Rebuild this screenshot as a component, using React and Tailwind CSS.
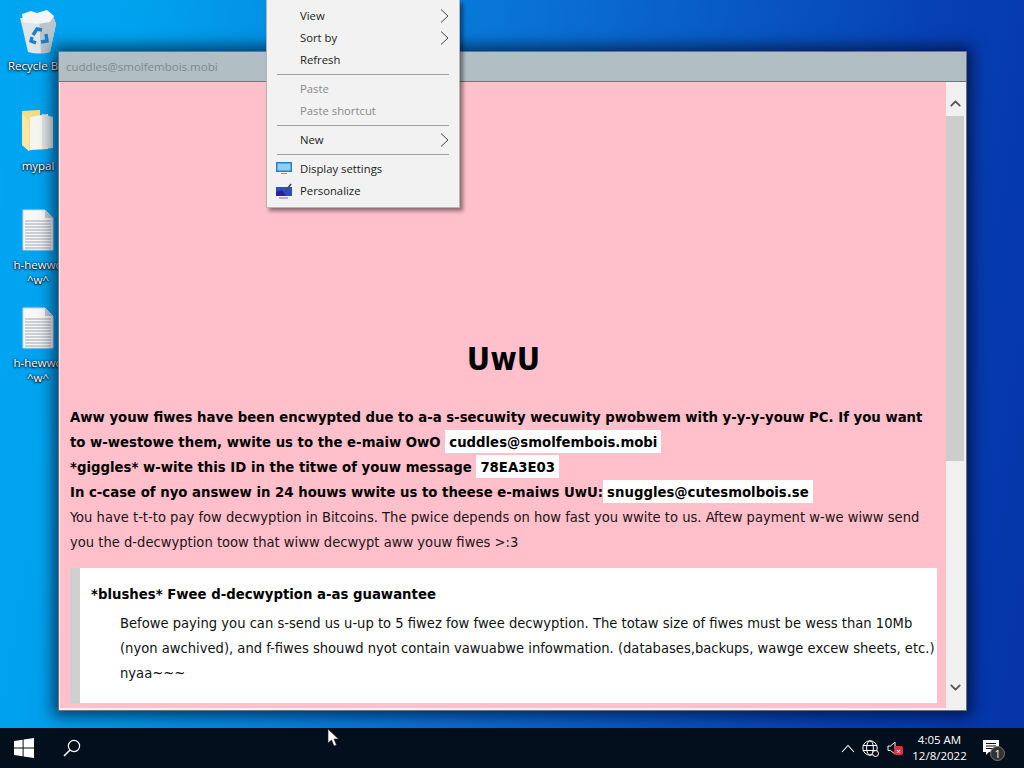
import { ChevronUp, ChevronDown } from "lucide-react";

const uiFont = { fontFamily: '"Open Sans", "Noto Sans", sans-serif' };

function RecycleIcon() {
  return (
    <svg width="42" height="46" viewBox="0 0 42 46">
      <path d="M3 10 L36 8 L39 16 L33 44 Q22 47 11 44 L5 18 Z" fill="#dfe6ea" />
      <path d="M22 9 L36 8 L39 16 L33 44 Q28 45 24 45 Z" fill="#b9c4cb" />
      <path d="M5 6 L14 3 L20 5 L30 2 L37 8 L33 14 L20 16 L6 14 Z" fill="#f3f5f6" />
      <g fill="none" stroke="#1f7fc9" strokeWidth="3.4">
        <path d="M16 27 L20 21 L25 22" />
        <path d="M29 26 L30 33 L24 34" />
        <path d="M19 35 L14 33 L15 29" />
      </g>
    </svg>
  );
}

function FolderIcon() {
  return (
    <svg width="34" height="44" viewBox="0 0 34 44">
      <path d="M1 2 L19 1 L19 36 L8 42 L1 36 Z" fill="#f6dd83" />
      <path d="M9 8 L27 5 L27 40 L9 41 Z" fill="#f6f6f2" />
      <path d="M21 5 L32 8 L32 39 L21 40 Z" fill="#dfe4e6" />
      <path d="M1 36 L1 5 L8 12 L8 42 Z" fill="#f8e7a6" />
    </svg>
  );
}

function DocIcon() {
  return (
    <svg width="32" height="42" viewBox="0 0 32 42">
      <path d="M1 1 H23 L31 9 V41 H1 Z" fill="#f7f8f9" stroke="#d4d8db" />
      <path d="M23 1 V9 H31 Z" fill="#c3ccd3" />
      <g stroke="#a3a7ab" strokeWidth="1">
        {[12, 15, 18, 21, 24, 27, 30, 33, 36, 39].map((y) => (
          <line key={y} x1="3" x2="29" y1={y} y2={y} />
        ))}
      </g>
    </svg>
  );
}

function DesktopIcon({ icon, label, second, className }) {
  return (
    <div className={"flex w-[76px] flex-col items-center " + className}>
      <div className="flex h-[46px] items-center justify-center">{icon}</div>
      <div
        className="mt-[4px] text-center text-[11.5px] leading-[15px] text-white [text-shadow:0_1px_2px_#000,0_0_3px_#000]"
        style={uiFont}
      >
        <div className="whitespace-nowrap">{label}</div>
        {second ? <div>{second}</div> : null}
      </div>
    </div>
  );
}

function MenuItem({ label, disabled, arrow, icon }) {
  return (
    <div className="relative flex h-[22px] items-center pl-[33px] text-[11.3px] leading-none">
      {icon ? <div className="absolute left-[9px] top-[3px]">{icon}</div> : null}
      <span className={disabled ? "text-[#8b8b8b]" : "text-[#1a1a1a]"}>{label}</span>
      {arrow ? (
        <svg
          width="9"
          height="14"
          viewBox="0 0 9 14"
          fill="none"
          stroke="#444"
          strokeWidth="1"
          className="absolute right-[10px] top-[4px]"
        >
          <path d="M1 0.5 L8 7 L1 13.5" />
        </svg>
      ) : null}
    </div>
  );
}

function MenuRule() {
  return <div className="mx-[10px] mt-[3.5px] mb-[2.5px] h-px bg-[#a0a0a0]" />;
}

function ContextMenu() {
  return (
    <div
      className="absolute left-[266px] top-0 z-20 w-[194px] border-r border-b border-l border-[#b5b5b5] bg-[#f2f2f2] pt-[4.5px] pb-[5px] shadow-[3px_3px_4px_rgba(0,0,0,0.45)]"
      style={uiFont}
    >
      <MenuItem label="View" arrow />
      <MenuItem label="Sort by" arrow />
      <MenuItem label="Refresh" />
      <MenuRule />
      <MenuItem label="Paste" disabled />
      <MenuItem label="Paste shortcut" disabled />
      <MenuRule />
      <MenuItem label="New" arrow />
      <MenuRule />
      <MenuItem
        label="Display settings"
        icon={
          <svg width="16" height="14" viewBox="0 0 16 14">
            <rect x="0" y="1" width="16" height="10" fill="#2b7fc0" />
            <rect x="1.5" y="2.5" width="13" height="7" fill="#8fd0f2" />
            <rect x="5" y="12" width="6" height="1" fill="#8a9aa5" />
          </svg>
        }
      />
      <MenuItem
        label="Personalize"
        icon={
          <svg width="16" height="16" viewBox="0 0 16 16">
            <rect x="0" y="4" width="16" height="9" fill="#2b4fc0" />
            <path d="M0 13 L0 9 L6 7 L10 13 Z" fill="#2a1fa0" />
            <path d="M9 9 L15 1" stroke="#3a4a58" strokeWidth="1.6" />
            <rect x="3" y="14.5" width="9" height="1" fill="#8a60c0" />
          </svg>
        }
      />
    </div>
  );
}

function Highlight({ children }) {
  return <span className="bg-white px-[4px] py-[3px]">{children}</span>;
}

function RansomWindow() {
  return (
    <div
      className="absolute left-[58px] top-[51px] z-10 flex h-[660px] w-[909px] flex-col border border-[#6d7478] bg-[#f0f0f0] shadow-[0_0_14px_5px_rgba(0,0,20,0.6)]"
      style={{ fontFamily: 'Tahoma, "DejaVu Sans Condensed", "DejaVu Sans", sans-serif' }}
    >
      <div
        className="flex h-[30px] shrink-0 items-center border-b border-[#6f7578] bg-[#b1bec4] pl-[7px] text-[11.5px] text-[#7c8a91]"
        style={uiFont}
      >
        cuddles@smolfembois.mobi
      </div>
      <div className="flex min-h-0 flex-1 pl-px pr-[2px] pb-[2px]">
        <div className="min-w-0 flex-1 overflow-hidden bg-[#ffc0cb] pt-[259px] pl-[10px] pr-[9px] text-[14.6px] leading-[25px] text-[#1e1214] [font-stretch:condensed]">
          <h1 className="mb-[27px] text-center text-[32px] leading-[36px] font-bold text-black">UwU</h1>
          <div className="text-[14.75px] font-bold text-black">
            <div>Aww youw fiwes have been encwypted due to a-a s-secuwity wecuwity pwobwem with y-y-y-youw PC. If you want</div>
            <div>to w-westowe them, wwite us to the e-maiw OwO <Highlight>cuddles@smolfembois.mobi</Highlight></div>
            <div>*giggles* w-wite this ID in the titwe of youw message <Highlight>78EA3E03</Highlight></div>
            <div>In c-case of nyo answew in 24 houws wwite us to theese e-maiws UwU:<Highlight>snuggles@cutesmolbois.se</Highlight></div>
          </div>
          <div>You have t-t-to pay fow decwyption in Bitcoins. The pwice depends on how fast you wwite to us. Aftew payment w-we wiww send</div>
          <div>you the d-decwyption toow that wiww decwypt aww youw fiwes &gt;:3</div>
          <div className="mt-[14px] flex h-[135px] bg-white">
            <div className="w-[10px] shrink-0 bg-[#d0d0d0]" />
            <div className="min-w-0 flex-1 pt-[13px] pl-[11px]">
              <div className="text-[14.75px] font-bold text-black">*blushes* Fwee d-decwyption a-as guawantee</div>
              <div className="mt-[4px] pl-[29px] text-[#111]">
                Befowe paying you can s-send us u-up to 5 fiwez fow fwee decwyption. The totaw size of fiwes must be wess than 10Mb (nyon awchived), and f-fiwes shouwd nyot contain vawuabwe infowmation. (databases,backups, wawge excew sheets, etc.) nyaa~~~
              </div>
            </div>
          </div>
        </div>
        <div className="flex w-[18px] shrink-0 flex-col items-center bg-[#f0f0f0]">
          <div className="flex h-[34px] w-full items-center justify-center pt-[8px]">
            <ChevronUp size={17} strokeWidth={2.5} className="text-[#555]" />
          </div>
          <div className="h-[345px] w-full bg-[#cdcdcd]" />
          <div className="flex-1" />
          <div className="flex h-[34px] w-full items-center justify-center pb-[8px]">
            <ChevronDown size={17} strokeWidth={2.5} className="text-[#555]" />
          </div>
        </div>
      </div>
    </div>
  );
}

function Taskbar() {
  return (
    <div className="flex h-10 shrink-0 items-center bg-[#030f1c] text-white" style={uiFont}>
      <div className="flex w-12 justify-center">
        <svg width="20" height="20" viewBox="0 0 20 20" fill="#fff">
          <path d="M0 3 L8.6 1.8 V9.4 H0 Z" />
          <path d="M9.6 1.6 L20 0 V9.4 H9.6 Z" />
          <path d="M0 10.4 H8.6 V18.2 L0 17 Z" />
          <path d="M9.6 10.4 H20 V20 L9.6 18.4 Z" />
        </svg>
      </div>
      <div className="flex w-[48px] justify-center">
        <svg width="18" height="18" viewBox="0 0 18 18" fill="none" stroke="#fff" strokeWidth="1.2">
          <circle cx="11" cy="7" r="5.6" />
          <path d="M7 11 L1 17" strokeWidth="1.6" />
        </svg>
      </div>
      <div className="flex-1" />
      <svg width="14" height="9" viewBox="0 0 14 9" fill="none" stroke="#fff" strokeWidth="1.1" className="mr-[7px]">
        <path d="M1 8 L7 1.5 L13 8" />
      </svg>
      <div className="relative mr-[9px] h-[16px] w-[16px]">
        <svg width="16" height="16" viewBox="0 0 16 16" fill="none" stroke="#fff" strokeWidth="1">
          <circle cx="8" cy="8" r="7.2" />
          <ellipse cx="8" cy="8" rx="3.4" ry="7.2" />
          <path d="M1 5.5 H15 M1 10.5 H15" />
        </svg>
        <div className="absolute -right-px -bottom-px h-[7px] w-[7px] rounded-full border border-white bg-[#111]" />
      </div>
      <div className="relative mr-[8px] h-[14px] w-[14px]">
        <svg width="9" height="14" viewBox="0 0 9 14" fill="none" stroke="#fff" strokeWidth="1">
          <path d="M1 5 H3.5 L8 1 V13 L3.5 9.5 H1 Z" />
        </svg>
        <div className="absolute left-[7px] top-[5px] flex h-[9px] w-[9px] items-center justify-center rounded-[2px] bg-[#d8343f] text-[8px] leading-none text-white">
          ×
        </div>
      </div>
      <div className="w-[61px] text-center text-[11.5px] leading-[16px]">
        <div>4:05 AM</div>
        <div>12/8/2022</div>
      </div>
      <div className="relative ml-[13px] mr-[23px] h-[18px] w-[18px]">
        <svg width="16" height="15" viewBox="0 0 16 15" fill="#fff" className="mt-px">
          <path d="M0 0 H16 V12 H6 L3 15 V12 H0 Z" />
          <path d="M3 3.5 H13 M3 6 H13 M3 8.5 H13" stroke="#030f1c" />
        </svg>
        <div className="absolute left-[7px] top-[7px] flex h-[15px] w-[15px] items-center justify-center rounded-full border border-[#777] bg-[#333] text-[10px] leading-none text-white">
          1
        </div>
      </div>
    </div>
  );
}

export default function App() {
  return (
    <div className="flex h-[768px] w-[1024px] flex-col overflow-hidden">
      <div className="relative min-h-0 flex-1 bg-[linear-gradient(100deg,#00a6f2_0%,#00a2ee_12%,#0a6cd2_50%,#0640b4_82%,#0534a8_100%)]">
        <div className="flex flex-col">
          <DesktopIcon className="mt-[8px]" icon={<RecycleIcon />} label="Recycle Bin" />
          <DesktopIcon className="mt-[35px]" icon={<FolderIcon />} label="mypal" />
          <DesktopIcon className="mt-[34px]" icon={<DocIcon />} label="h-hewwo" second="^w^" />
          <DesktopIcon className="mt-[18px]" icon={<DocIcon />} label="h-hewwo" second="^w^" />
        </div>
        <RansomWindow />
        <ContextMenu />
        <svg width="14" height="20" viewBox="0 0 14 20" className="absolute left-[327px] top-[728px] z-30">
          <path d="M1 1 V15 L4.5 12 L7 18 L9.5 17 L7 11 H11.5 Z" fill="#fff" stroke="#222" strokeWidth="0.6" />
        </svg>
      </div>
      <Taskbar />
    </div>
  );
}
